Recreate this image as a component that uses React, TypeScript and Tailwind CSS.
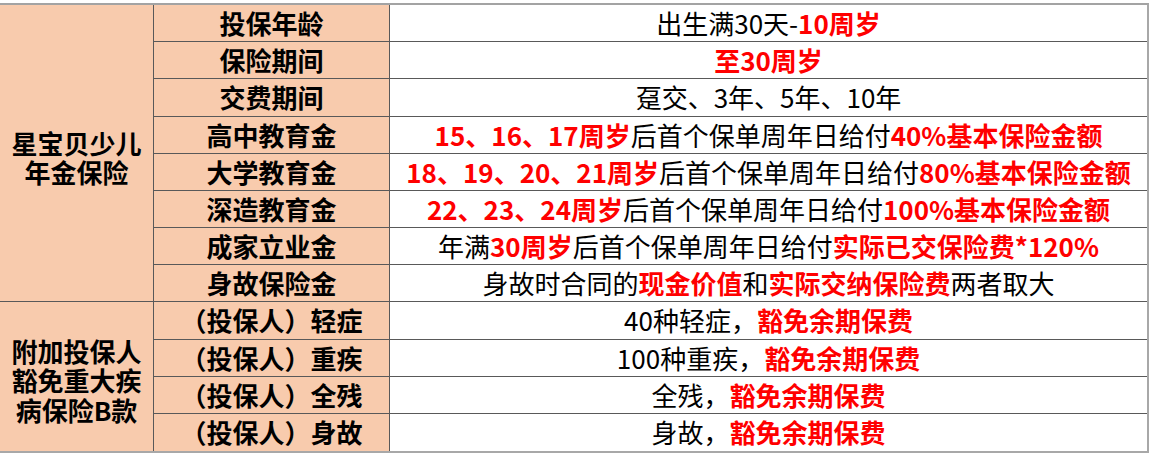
type Seg = { t: string; red?: boolean };

const rows: { label: string; content: Seg[] }[] = [
  { label: '投保年龄', content: [{ t: '出生满30天-' }, { t: '10周岁', red: true }] },
  { label: '保险期间', content: [{ t: '至30周岁', red: true }] },
  { label: '交费期间', content: [{ t: '趸交、3年、5年、10年' }] },
  {
    label: '高中教育金',
    content: [
      { t: '15、16、17周岁', red: true },
      { t: '后首个保单周年日给付' },
      { t: '40%基本保险金额', red: true },
    ],
  },
  {
    label: '大学教育金',
    content: [
      { t: '18、19、20、21周岁', red: true },
      { t: '后首个保单周年日给付' },
      { t: '80%基本保险金额', red: true },
    ],
  },
  {
    label: '深造教育金',
    content: [
      { t: '22、23、24周岁', red: true },
      { t: '后首个保单周年日给付' },
      { t: '100%基本保险金额', red: true },
    ],
  },
  {
    label: '成家立业金',
    content: [
      { t: '年满' },
      { t: '30周岁', red: true },
      { t: '后首个保单周年日给付' },
      { t: '实际已交保险费*120%', red: true },
    ],
  },
  {
    label: '身故保险金',
    content: [
      { t: '身故时合同的' },
      { t: '现金价值', red: true },
      { t: '和' },
      { t: '实际交纳保险费', red: true },
      { t: '两者取大' },
    ],
  },
  { label: '（投保人）轻症', content: [{ t: '40种轻症，' }, { t: '豁免余期保费', red: true }] },
  { label: '（投保人）重疾', content: [{ t: '100种重疾，' }, { t: '豁免余期保费', red: true }] },
  { label: '（投保人）全残', content: [{ t: '全残，' }, { t: '豁免余期保费', red: true }] },
  { label: '（投保人）身故', content: [{ t: '身故，' }, { t: '豁免余期保费', red: true }] },
];

export default function App() {
  return (
    <div
      className="bg-white pt-[3px] text-black"
      style={{ fontFamily: '"Noto Sans CJK SC", "Noto Sans", sans-serif' }}
    >
      <div className="grid h-[450px] w-[1149px] grid-cols-[154px_236px_1fr] grid-rows-[repeat(12,minmax(0,1fr))] border-t-2 border-r-2 border-b-2 border-t-[#a3a3a3] border-r-[#a8a8a8] border-b-[#a8a8a8]">
        <div className="col-start-1 row-span-8 row-start-1 flex flex-col items-center justify-center gap-[1px] border-r border-b border-[#595959] bg-[#f8cbad] pt-[9px] text-center text-[26px] leading-[28px] font-bold">
          <span>星宝贝少儿</span>
          <span>年金保险</span>
        </div>
        <div className="col-start-1 row-span-4 row-start-9 flex flex-col items-center justify-center gap-[1px] border-r border-[#595959] bg-[#f8cbad] pt-[8px] text-center text-[26px] leading-[28.5px] font-bold">
          <span>附加投保人</span>
          <span>豁免重大疾</span>
          <span>病保险B款</span>
        </div>
        {rows.map((r, i) => {
          const last = i === rows.length - 1;
          return [
            <div
              key={r.label}
              className={`col-start-2 flex items-center justify-center border-r border-[#595959] bg-[#f8cbad] text-[26px] leading-none font-bold whitespace-nowrap ${last ? '' : 'border-b'}`}
            >
              {r.label}
            </div>,
            <div
              key={r.label + '-v'}
              className={`col-start-3 flex items-center justify-center border-[#595959] text-[26px] leading-none whitespace-nowrap ${last ? '' : 'border-b'}`}
            >
              {r.content.map((s, j) => (
                <span key={j} className={s.red ? 'font-bold text-[#ff0000]' : ''}>
                  {s.t}
                </span>
              ))}
            </div>,
          ];
        })}
      </div>
    </div>
  );
}
